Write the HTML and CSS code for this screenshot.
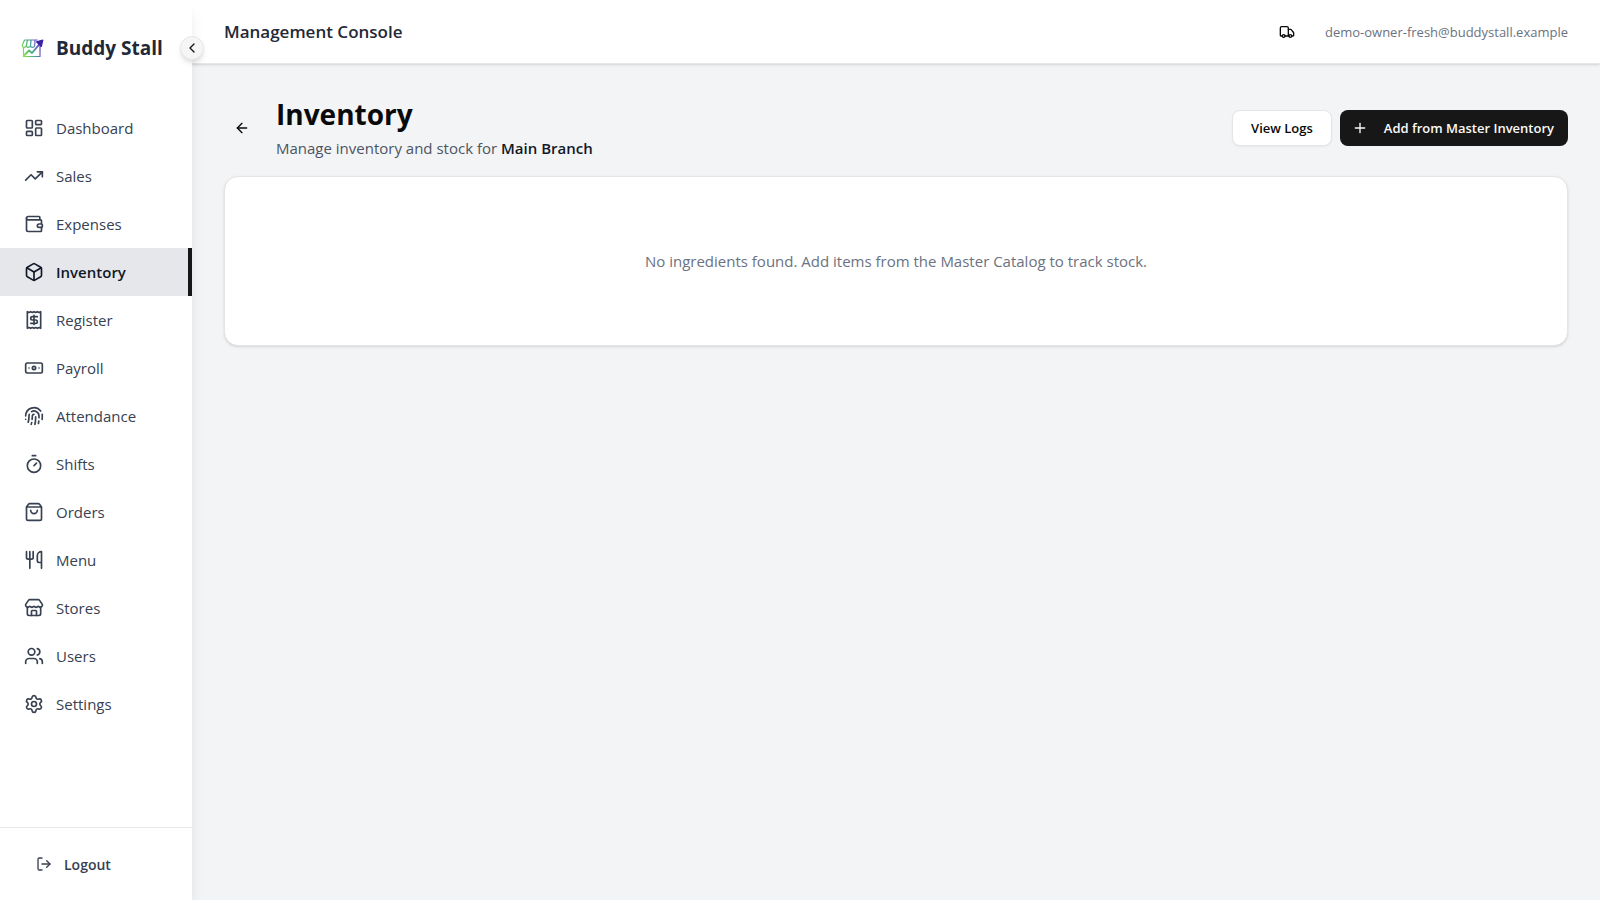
FILE: index.html
```html
<!DOCTYPE html>
<html lang="en">
<head>
<meta charset="UTF-8">
<meta name="viewport" content="width=device-width, initial-scale=1.0">
<title>Buddy Stall - Inventory</title>
<link rel="stylesheet" href="styles.css">
</head>
<body>
    <div class="app">
        <aside class="sidebar">
            <div class="brand">
                <svg class="logo" viewBox="0 0 24 24" fill="none" stroke="url(#logo-gradient)" stroke-width="1.2" stroke-linejoin="round">
                    <defs>
                        <linearGradient id="logo-gradient" gradientUnits="userSpaceOnUse" x1="2" y1="16" x2="22" y2="8">
                            <stop offset="0" stop-color="#8fe03c"/>
                            <stop offset="0.45" stop-color="#3fae8c"/>
                            <stop offset="0.75" stop-color="#6d5cc8"/>
                            <stop offset="1" stop-color="#4a1fa8"/>
                        </linearGradient>
                    </defs>
                    <path d="M4.500 4h13M4.500 4 2.200 9.500c0 2.400 3.800 2.400 4.100 0L7.500 4M6.300 9.500c0 2.400 4 2.400 4.200 0L11 4M10.500 9.500c0 2.400 4 2.400 4.200 0l.3-5.500"/>
                    <path d="M3.500 11.500v9h16.500V10"/>
                    <path d="m4 19.500 5-5 3 2.500L20 7.500" stroke-width="1.900"/>
                    <path d="m16.500 5.800 6.300-1.600-1.500 6.300Z" fill="#3a22a4" stroke="#3a22a4"/>
                </svg>
                <span class="brand-name">Buddy Stall</span>
            </div>
            <button class="collapse" type="button" aria-label="Collapse sidebar">
                <svg class="icon icon-sm" viewBox="0 0 24 24"><path d="m15 18-6-6 6-6"/></svg>
            </button>

            <nav class="nav">
                <a class="nav-link" href="#dashboard">
                    <svg class="icon" viewBox="0 0 24 24"><rect width="7" height="9" x="3" y="3" rx="1"/><rect width="7" height="5" x="14" y="3" rx="1"/><rect width="7" height="9" x="14" y="12" rx="1"/><rect width="7" height="5" x="3" y="16" rx="1"/></svg>
                    Dashboard
                </a>
                <a class="nav-link" href="#sales">
                    <svg class="icon" viewBox="0 0 24 24"><path d="M16 7h6v6"/><path d="m22 7-8.500 8.500-5-5L2 17"/></svg>
                    Sales
                </a>
                <a class="nav-link" href="#expenses">
                    <svg class="icon" viewBox="0 0 24 24"><path d="M19 7V4a1 1 0 0 0-1-1H5a2 2 0 0 0 0 4h15a1 1 0 0 1 1 1v4h-3a2 2 0 0 0 0 4h3a1 1 0 0 0 1-1v-2a1 1 0 0 0-1-1"/><path d="M3 5v14a2 2 0 0 0 2 2h15a1 1 0 0 0 1-1v-4"/></svg>
                    Expenses
                </a>
                <a class="nav-link active" href="#inventory" aria-current="page">
                    <svg class="icon" viewBox="0 0 24 24"><path d="M21 8a2 2 0 0 0-1-1.730l-7-4a2 2 0 0 0-2 0l-7 4A2 2 0 0 0 3 8v8a2 2 0 0 0 1 1.730l7 4a2 2 0 0 0 2 0l7-4A2 2 0 0 0 21 16Z"/><path d="m3.300 7 8.700 5 8.700-5"/><path d="M12 22V12"/></svg>
                    Inventory
                </a>
                <a class="nav-link" href="#register">
                    <svg class="icon" viewBox="0 0 24 24"><path d="M4 2v20l2-1 2 1 2-1 2 1 2-1 2 1 2-1 2 1V2l-2 1-2-1-2 1-2-1-2 1-2-1-2 1Z"/><path d="M16 8h-6a2 2 0 1 0 0 4h4a2 2 0 1 1 0 4H8"/><path d="M12 17.500v-11"/></svg>
                    Register
                </a>
                <a class="nav-link" href="#payroll">
                    <svg class="icon" viewBox="0 0 24 24"><rect width="20" height="12" x="2" y="6" rx="2"/><circle cx="12" cy="12" r="2"/><path d="M6 12h.01M18 12h.01"/></svg>
                    Payroll
                </a>
                <a class="nav-link" href="#attendance">
                    <svg class="icon" viewBox="0 0 24 24"><path d="M12 10a2 2 0 0 0-2 2c0 1.020-.1 2.510-.26 4"/><path d="M14 13.120c0 2.380 0 6.380-1 8.880"/><path d="M17.290 21.020c.12-.6.43-2.300.5-3.020"/><path d="M2 12a10 10 0 0 1 18-6"/><path d="M2 16h.01"/><path d="M21.800 16c.2-2 .131-5.354 0-6"/><path d="M5 19.500C5.500 18 6 15 6 12a6 6 0 0 1 .34-2"/><path d="M8.650 22c.21-.66.45-1.320.57-2"/><path d="M9 6.800a6 6 0 0 1 9 5.200v2"/></svg>
                    Attendance
                </a>
                <a class="nav-link" href="#shifts">
                    <svg class="icon" viewBox="0 0 24 24"><path d="M10 2h4"/><path d="m12 14 3-3"/><circle cx="12" cy="14" r="8"/></svg>
                    Shifts
                </a>
                <a class="nav-link" href="#orders">
                    <svg class="icon" viewBox="0 0 24 24"><path d="M16 10a4 4 0 0 1-8 0"/><path d="M3.103 6.034h17.794"/><path d="M3.400 5.467a2 2 0 0 0-.4 1.200V20a2 2 0 0 0 2 2h14a2 2 0 0 0 2-2V6.667a2 2 0 0 0-.4-1.200l-2-2.667A2 2 0 0 0 17 2H7a2 2 0 0 0-1.600.8z"/></svg>
                    Orders
                </a>
                <a class="nav-link" href="#menu">
                    <svg class="icon" viewBox="0 0 24 24"><path d="M3 2v7c0 1.100.9 2 2 2h4a2 2 0 0 0 2-2V2"/><path d="M7 2v20"/><path d="M21 15V2a5 5 0 0 0-5 5v6c0 1.100.9 2 2 2h3Zm0 0v7"/></svg>
                    Menu
                </a>
                <a class="nav-link" href="#stores">
                    <svg class="icon" viewBox="0 0 24 24"><path d="M15 21v-5a1 1 0 0 0-1-1h-4a1 1 0 0 0-1 1v5"/><path d="M17.774 10.310a1.120 1.120 0 0 0-1.549 0 2.500 2.500 0 0 1-3.451 0 1.120 1.120 0 0 0-1.548 0 2.500 2.500 0 0 1-3.452 0 1.120 1.120 0 0 0-1.549 0 2.500 2.500 0 0 1-3.770-3.248l2.889-4.184A2 2 0 0 1 7 2h10a2 2 0 0 1 1.653.873l2.895 4.192a2.500 2.500 0 0 1-3.774 3.244"/><path d="M4 10.950V19a2 2 0 0 0 2 2h12a2 2 0 0 0 2-2v-8.050"/></svg>
                    Stores
                </a>
                <a class="nav-link" href="#users">
                    <svg class="icon" viewBox="0 0 24 24"><path d="M16 21v-2a4 4 0 0 0-4-4H6a4 4 0 0 0-4 4v2"/><path d="M16 3.128a4 4 0 0 1 0 7.744"/><path d="M22 21v-2a4 4 0 0 0-3-3.870"/><circle cx="9" cy="7" r="4"/></svg>
                    Users
                </a>
                <a class="nav-link" href="#settings">
                    <svg class="icon" viewBox="0 0 24 24"><path d="M9.671 4.136a2.340 2.340 0 0 1 4.659 0 2.340 2.340 0 0 0 3.319 1.915 2.340 2.340 0 0 1 2.330 4.033 2.340 2.340 0 0 0 0 3.831 2.340 2.340 0 0 1-2.330 4.033 2.340 2.340 0 0 0-3.319 1.915 2.340 2.340 0 0 1-4.659 0 2.340 2.340 0 0 0-3.320-1.915 2.340 2.340 0 0 1-2.330-4.033 2.340 2.340 0 0 0 0-3.831A2.340 2.340 0 0 1 6.350 6.051a2.340 2.340 0 0 0 3.319-1.915"/><circle cx="12" cy="12" r="3"/></svg>
                    Settings
                </a>
            </nav>

            <div class="sidebar-footer">
                <button class="logout" type="button">
                    <svg class="icon icon-sm" viewBox="0 0 24 24"><path d="m16 17 5-5-5-5"/><path d="M21 12H9"/><path d="M9 21H5a2 2 0 0 1-2-2V5a2 2 0 0 1 2-2h4"/></svg>
                    Logout
                </button>
            </div>
        </aside>

        <div class="content">
            <header class="topbar">
                <h2 class="topbar-title">Management Console</h2>
                <div class="account">
                    <button class="icon-button" type="button" aria-label="Deliveries">
                        <svg class="icon icon-sm" viewBox="0 0 24 24"><path d="M14 18V6a2 2 0 0 0-2-2H4a2 2 0 0 0-2 2v11a1 1 0 0 0 1 1h2"/><path d="M15 18H9"/><path d="M19 18h2a1 1 0 0 0 1-1v-3.650a1 1 0 0 0-.22-.624l-3.480-4.350A1 1 0 0 0 17.520 8H14"/><circle cx="17" cy="18" r="2"/><circle cx="7" cy="18" r="2"/></svg>
                    </button>
                    <span class="email">demo-owner-fresh@buddystall.example</span>
                </div>
            </header>

            <main class="page">
                <div class="page-header">
                    <button class="icon-button" type="button" aria-label="Go back">
                        <svg class="icon icon-sm" viewBox="0 0 24 24"><path d="m12 19-7-7 7-7"/><path d="M19 12H5"/></svg>
                    </button>
                    <div class="page-heading">
                        <h1>Inventory</h1>
                        <p>Manage inventory and stock for <strong>Main Branch</strong></p>
                    </div>
                    <div class="actions">
                        <button class="btn btn-outline" type="button">View Logs</button>
                        <button class="btn btn-primary" type="button">
                            <svg class="icon icon-sm" viewBox="0 0 24 24"><path d="M5 12h14"/><path d="M12 5v14"/></svg>
                            Add from Master Inventory
                        </button>
                    </div>
                </div>

                <section class="card">
                    <p class="empty">No ingredients found. Add items from the Master Catalog to track stock.</p>
                </section>
            </main>
        </div>
    </div>
</body>
</html>
```
FILE: styles.css
```css
* {
    box-sizing: border-box;
}
body {
    margin: 0;
    font-family: "Segoe UI", "Open Sans", "Noto Sans", sans-serif;
    font-size: 15px;
    line-height: 24px;
    color: #0a0a0a;
    background-color: #f3f4f6;
}
h1, h2, p {
    margin: 0;
}
button {
    font-family: inherit;
    cursor: pointer;
}
.app {
    display: flex;
    min-height: 100vh;
}
.icon {
    width: 20px;
    height: 20px;
    flex-shrink: 0;
    fill: none;
    stroke: currentColor;
    stroke-width: 2;
    stroke-linecap: round;
    stroke-linejoin: round;
}
.icon-sm {
    width: 16px;
    height: 16px;
}

/* Sidebar */
.sidebar {
    position: relative;
    z-index: 1;
    display: flex;
    flex-direction: column;
    width: 192px;
    flex-shrink: 0;
    background-color: #fff;
    box-shadow: 0 10px 15px -3px rgba(0,0,0,0.1), 0 4px 6px -4px rgba(0,0,0,0.1);
}
.brand {
    display: flex;
    align-items: center;
    gap: 12px;
    height: 96px;
    padding: 0 20px;
}
.logo {
    width: 24px;
    height: 24px;
    flex-shrink: 0;
}
.brand-name {
    font-size: 19px;
    font-weight: 700;
    line-height: 28px;
    color: #1f2937;
    white-space: nowrap;
}
/* sits on the sidebar's right edge */
.collapse {
    position: absolute;
    top: 36px;
    right: -12px;
    display: flex;
    align-items: center;
    justify-content: center;
    width: 24px;
    height: 24px;
    padding: 0;
    border: 1px solid #e5e7eb;
    border-radius: 50%;
    background-color: #f5f5f5;
    color: #171717;
    box-shadow: 0 4px 6px -1px rgba(0,0,0,0.1), 0 2px 4px -2px rgba(0,0,0,0.1);
}
.nav {
    display: flex;
    flex-direction: column;
    flex: 1;
    padding-top: 8px;
}
.nav-link {
    display: flex;
    align-items: center;
    gap: 12px;
    height: 48px;
    padding: 0 24px;
    border-right: 4px solid transparent;
    color: #374151;
    text-decoration: none;
}
.nav-link:hover {
    background-color: #f3f4f6;
}
.nav-link.active {
    border-right-color: #171717;
    background-color: #e5e7eb;
    color: #111827;
    font-weight: 600;
}
.sidebar-footer {
    padding: 16px;
    border-top: 1px solid #e5e7eb;
}
.logout {
    display: flex;
    align-items: center;
    gap: 12px;
    width: 100%;
    height: 40px;
    padding: 0 20px;
    border: none;
    background: none;
    color: #374151;
    font-size: 14px;
    font-weight: 600;
}

/* Top bar */
.content {
    flex: 1;
    min-width: 0;
}
.topbar {
    display: flex;
    align-items: center;
    justify-content: space-between;
    height: 64px;
    padding: 0 32px;
    border-bottom: 1px solid #e5e7eb;
    background-color: #fff;
    box-shadow: 0 1px 3px rgba(0,0,0,0.1), 0 1px 2px -1px rgba(0,0,0,0.1);
}
.topbar-title {
    font-size: 17px;
    font-weight: 600;
    line-height: 28px;
    color: #1f2937;
}
.account {
    display: flex;
    align-items: center;
    gap: 20px;
}
.email {
    font-size: 13px;
    color: #6b7280;
}
.icon-button {
    display: flex;
    align-items: center;
    justify-content: center;
    width: 36px;
    height: 36px;
    padding: 0;
    border: none;
    border-radius: 8px;
    background: none;
    color: #0a0a0a;
}

/* Page */
.page {
    display: flex;
    flex-direction: column;
    gap: 16px;
    padding: 32px;
}
.page-header {
    display: flex;
    align-items: center;
    gap: 16px;
}
.page-heading {
    display: flex;
    flex-direction: column;
    gap: 4px;
    flex: 1;
}
.page-heading h1 {
    font-size: 28px;
    font-weight: 700;
    line-height: 36px;
}
.page-heading p {
    color: #4b5563;
}
.page-heading strong {
    font-weight: 600;
    color: #111827;
}
.actions {
    display: flex;
    gap: 8px;
}
.btn {
    display: flex;
    align-items: center;
    gap: 16px;
    height: 36px;
    border: none;
    border-radius: 8px;
    font-size: 13px;
    font-weight: 600;
    white-space: nowrap;
}
.btn-outline {
    padding: 0 18px;
    border: 1px solid #e5e5e5;
    background-color: #fff;
    color: #0a0a0a;
    box-shadow: 0 1px 2px rgba(0,0,0,0.05);
}
.btn-primary {
    padding: 0 14px 0 12px;
    background-color: #171717;
    color: #fafafa;
}
.card {
    padding: 72px 24px;
    border: 1px solid #e5e5e5;
    border-radius: 14px;
    background-color: #fff;
    box-shadow: 0 1px 3px rgba(0,0,0,0.1), 0 1px 2px -1px rgba(0,0,0,0.1);
}
.empty {
    color: #6b7280;
    text-align: center;
}
```
